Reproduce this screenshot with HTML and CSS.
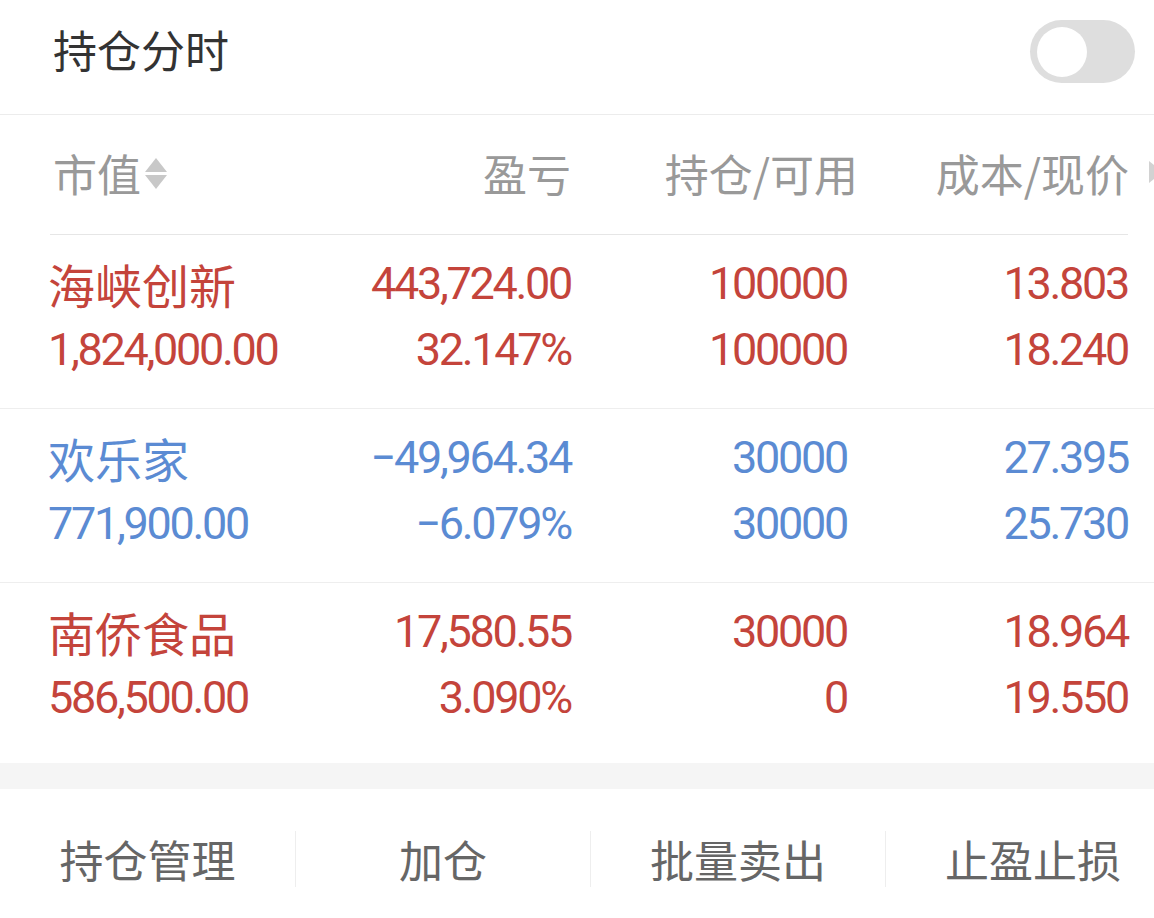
FILE: index.html
```html
<!DOCTYPE html>
<html lang="zh-CN">
<head>
<meta charset="utf-8">
<title>持仓分时</title>
<link rel="stylesheet" href="styles.css">
</head>
<body>
<div class="page">
  <div class="titlebar">
    <div class="title">持仓分时</div>
    <div class="toggle"><div class="knob"></div></div>
  </div>

  <div class="colhead">
    <div class="colhead-inner">
      <div class="hc c1">市值<span class="sort"><span class="up"></span><span class="down"></span></span></div>
      <div class="hc c2">盈亏</div>
      <div class="hc c3">持仓/可用</div>
      <div class="hc c4">成本/现价</div>
      <div class="more"></div>
    </div>
  </div>

  <div class="list">
    <div class="row red">
      <div class="cell c1"><div class="name">海峡创新</div><div class="num">1,824,000.00</div></div>
      <div class="cell c2"><div class="num">443,724.00</div><div class="num">32.147%</div></div>
      <div class="cell c3"><div class="num">100000</div><div class="num">100000</div></div>
      <div class="cell c4"><div class="num">13.803</div><div class="num">18.240</div></div>
    </div>
    <div class="row blue">
      <div class="cell c1"><div class="name">欢乐家</div><div class="num">771,900.00</div></div>
      <div class="cell c2"><div class="num">−49,964.34</div><div class="num">−6.079%</div></div>
      <div class="cell c3"><div class="num">30000</div><div class="num">30000</div></div>
      <div class="cell c4"><div class="num">27.395</div><div class="num">25.730</div></div>
    </div>
    <div class="row red last">
      <div class="cell c1"><div class="name">南侨食品</div><div class="num">586,500.00</div></div>
      <div class="cell c2"><div class="num">17,580.55</div><div class="num">3.090%</div></div>
      <div class="cell c3"><div class="num">30000</div><div class="num">0</div></div>
      <div class="cell c4"><div class="num">18.964</div><div class="num">19.550</div></div>
    </div>
  </div>

  <div class="band"></div>

  <div class="actions">
    <div class="act">持仓管理</div>
    <div class="act sep">加仓</div>
    <div class="act sep">批量卖出</div>
    <div class="act sep">止盈止损</div>
  </div>
</div>
</body>
</html>
```

FILE: styles.css
```css
html, body {
  margin: 0;
  padding: 0;
  background: #ffffff;
}
body {
  width: 1154px;
  height: 918px;
  overflow: hidden;
  font-family: "Noto Sans CJK SC", "Noto Sans", sans-serif;
}
.page {
  width: 1154px;
  overflow: hidden;
}

/* title bar */
.titlebar {
  height: 115px;
  box-sizing: border-box;
  padding: 18px 19px 0 53px;
  display: flex;
  justify-content: space-between;
  align-items: flex-start;
  border-bottom: 1px solid #ececec;
}
.title {
  font-size: 44px;
  line-height: 63px;
  color: #333333;
}
.toggle {
  margin-top: 2px;
  width: 105px;
  height: 63px;
  border-radius: 32px;
  background: #dedede;
  box-sizing: border-box;
  padding: 7px;
}
.knob {
  width: 50px;
  height: 50px;
  border-radius: 50%;
  background: #ffffff;
}

/* column header */
.colhead {
  height: 120px;
}
.colhead-inner {
  height: 119px;
  margin: 0 26px 0 50px;
  border-bottom: 1px solid #e6e6e6;
  display: grid;
  grid-template-columns: 280px 238px 287px 271px 1fr;
  align-items: center;
  padding-left: 3px;
}
.hc {
  font-size: 44px;
  line-height: 60px;
  color: #999999;
  white-space: nowrap;
  margin-top: -4px;
}
.hc.c1 {
  display: flex;
  align-items: center;
}
.hc.c2, .hc.c3, .hc.c4 {
  text-align: right;
}
.sort {
  display: flex;
  flex-direction: column;
  gap: 3px;
  margin-left: 4px;
  margin-top: 1px;
}
.sort .up {
  width: 0;
  height: 0;
  border-left: 11px solid transparent;
  border-right: 11px solid transparent;
  border-bottom: 14px solid #c8c8c8;
}
.sort .down {
  width: 0;
  height: 0;
  border-left: 11px solid transparent;
  border-right: 11px solid transparent;
  border-top: 14px solid #c8c8c8;
}
.more {
  width: 0;
  height: 0;
  margin-left: 20px;
  margin-right: -30px;
  margin-top: -6px;
  border-top: 11px solid transparent;
  border-bottom: 11px solid transparent;
  border-left: 14px solid #d2d2d2;
}

/* rows */
.list {
  padding-bottom: 7px;
}
.row {
  display: grid;
  grid-template-columns: 283px 240px 276px 281px;
  padding: 16px 0 25px 48px;
  border-bottom: 1px solid #eeeeee;
}
.row.last {
  border-bottom: none;
}
.row.red { color: #c4443b; }
.row.blue { color: #5b8bd3; }
.cell.c2, .cell.c3, .cell.c4 {
  text-align: right;
}
.name {
  font-family: "Noto Sans CJK SC", sans-serif;
  font-size: 47px;
  line-height: 66px;
  white-space: nowrap;
}
.num {
  font-family: Roboto, "Noto Sans", sans-serif;
  font-size: 45px;
  line-height: 66px;
  letter-spacing: -2.3px;
  white-space: nowrap;
}

/* gray band */
.band {
  height: 26px;
  background: #f5f5f5;
}

/* bottom actions */
.actions {
  display: flex;
  width: 1180px;
  height: 140px;
  align-items: center;
}
.act {
  flex: 0 0 295px;
  box-sizing: border-box;
  height: 56px;
  line-height: 56px;
  text-align: center;
  font-size: 44px;
  color: #666666;
}
.act.sep {
  border-left: 1px solid #eeeeee;
}
```
